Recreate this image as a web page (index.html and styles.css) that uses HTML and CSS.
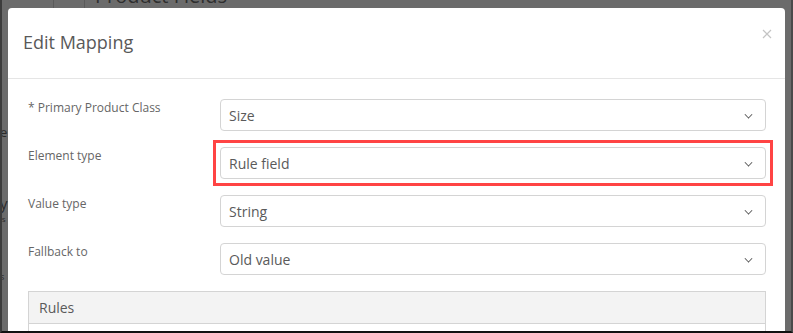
FILE: index.html
```html
<!DOCTYPE html>
<html lang="en">
<head>
  <meta charset="UTF-8">
  <title>Edit Mapping</title>
  <link rel="stylesheet" href="styles.css">
</head>
<body>
  <div class="screen">
    <!-- page behind the modal backdrop -->
    <div class="backdrop">
      <div class="page-head">
        <span class="page-rail"></span>
        <span class="page-title">Product Fields</span>
      </div>
      <div class="page-bits">
        <span class="bit bit-e">e</span>
        <span class="bit bit-y">y</span>
        <span class="bit bit-s">ss</span>
        <span class="bit bit-s2">s</span>
      </div>
    </div>

    <div class="modal">
      <div class="modal-header">
        <h4 class="modal-title">Edit Mapping</h4>
        <button class="close" type="button" aria-label="Close">
          <svg width="10" height="10" viewBox="0 0 10 10"><path d="M1 1L9 9M9 1L1 9" stroke="#c4c4c4" stroke-width="1.2" fill="none"/></svg>
        </button>
      </div>

      <div class="modal-body">
        <div class="form-grid">
          <label class="field-label">* Primary Product Class</label>
          <div class="select">Size<span class="chev"></span></div>

          <label class="field-label">Element type</label>
          <div class="highlight">
            <div class="select">Rule field<span class="chev"></span></div>
          </div>

          <label class="field-label">Value type</label>
          <div class="select">String<span class="chev"></span></div>

          <label class="field-label">Fallback to</label>
          <div class="select">Old value<span class="chev"></span></div>
        </div>

        <div class="panel">
          <div class="panel-heading">Rules</div>
          <div class="panel-body"></div>
        </div>
      </div>
    </div>
  </div>
</body>
</html>
```

FILE: styles.css
```css
* {
  box-sizing: border-box;
}
body {
  margin: 0;
  font-family: "Open Sans", Arial, sans-serif;
  color: #555;
}
.screen {
  position: relative;
  width: 793px;
  height: 333px;
  overflow: hidden;
  background: #6b6b6b;
  border-left: 2px solid #3c3c3c;
  border-right: 2px solid #4a4a4a;
  border-bottom: 2px solid #111;
}
.backdrop {
  height: 100%;
}
.page-head {
  position: relative;
  height: 8px;
  overflow: hidden;
}
.page-rail {
  position: absolute;
  left: 51px;
  top: 0;
  width: 32px;
  height: 8px;
  border-left: 1px solid #5a5a5a;
  border-right: 1px solid #5a5a5a;
}
.page-title {
  position: absolute;
  left: 93px;
  top: -18px;
  font-size: 20px;
  color: #2e2e2e;
}
.page-bits {
  position: relative;
}
.bit {
  position: absolute;
  left: -2px;
  font-size: 13px;
  line-height: 14px;
  color: #2a2a2a;
}
.bit-e { top: 117px; }
.bit-y { top: 189px; font-size: 15px; line-height: 13px; }
.bit-s { top: 207px; font-size: 8px; line-height: 8px; left: -4px; }
.bit-s2 { top: 262px; font-size: 9px; }

.modal {
  position: absolute;
  left: 6px;
  top: 8px;
  width: 777px;
  height: 340px;
  background: #fff;
  border-radius: 4px;
}
.modal-header {
  display: flex;
  align-items: flex-start;
  justify-content: space-between;
  height: 71px;
  padding: 0 15px;
  border-bottom: 1px solid #e5e5e5;
}
.modal-title {
  margin: 22px 0 0;
  font-size: 18px;
  font-weight: 400;
  line-height: 24px;
  color: #595959;
}
.close {
  margin: 19px -2px 0 0;
  padding: 0;
  border: 0;
  background: none;
  width: 10px;
  height: 10px;
}
.modal-body {
  padding: 20px 19px 0 20px;
}
.form-grid {
  display: grid;
  grid-template-columns: 192px 1fr;
  grid-auto-rows: 32px;
  row-gap: 16px;
}
.field-label {
  font-size: 12px;
  line-height: 18px;
  color: #666;
}
.select {
  position: relative;
  display: flex;
  align-items: center;
  height: 32px;
  padding-left: 8px;
  border: 1px solid #d4d4d4;
  border-radius: 4px;
  font-size: 14px;
  color: #5a5a5a;
}
.chev {
  position: absolute;
  right: 13px;
  top: 11px;
  width: 7px;
  height: 7px;
  border-right: 1.4px solid #444;
  border-bottom: 1.4px solid #444;
  transform: rotate(45deg) scale(0.8);
}
.highlight {
  margin: -7px -7px;
  padding: 4px;
  border: 3px solid #ff4444;
  height: 46px;
}
.panel {
  margin-top: 16px;
  border: 1px solid #d4d4d4;
}
.panel-heading {
  height: 32px;
  padding: 0 10px;
  display: flex;
  align-items: center;
  background: #f3f3f3;
  border-bottom: 1px solid #d4d4d4;
  font-size: 14px;
  color: #5a5a5a;
}
.panel-body {
  height: 40px;
}
```
